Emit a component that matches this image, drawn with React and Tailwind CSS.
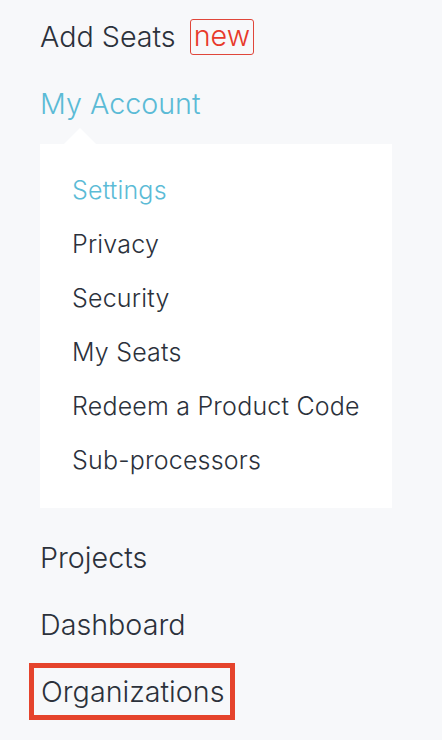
import React from 'react';

const subItems = ['Settings', 'Privacy', 'Security', 'My Seats', 'Redeem a Product Code', 'Sub-processors'];

export default function App() {
    return (
        <div
            className="min-h-screen w-full bg-[#f7f8fa] text-[#2b313b] font-light pl-[40px] pt-[3px]"
            style={{ fontFamily: 'Inter, "Noto Sans", sans-serif' }}
        >
            <div className="h-[67px] flex items-center text-[28.7px]">
                <span>Add Seats</span>
                <span className="ml-[14px] h-[36px] px-[3px] flex items-center border border-[#e0463a] rounded-[3px] text-[#e8392a] leading-none">
                    new
                </span>
            </div>
            <div className="h-[67px] flex items-center text-[28.7px] text-[#5bbbd6]">My Account</div>

            <div className="relative mt-[7px] w-[352px] bg-white pt-[20px] pb-[20px] pl-[32px]">
                <div className="absolute -top-[16px] left-[24px] w-0 h-0 border-l-[16px] border-r-[16px] border-b-[16px] border-l-transparent border-r-transparent border-b-white" />
                {subItems.map((item, i) => (
                    <div
                        key={item}
                        className={
                            'h-[54px] flex items-center text-[25px] tracking-[0.2px] ' +
                            (i === 0 ? 'text-[#5bbbd6]' : 'text-[#2b313b]')
                        }
                    >
                        {item}
                    </div>
                ))}
            </div>

            <div className="mt-[16px] h-[67px] flex items-center text-[28.7px]">Projects</div>
            <div className="h-[67px] flex items-center text-[28.7px]">Dashboard</div>
            <div className="h-[67px] flex items-center">
                <div className="-ml-[11px] h-[57px] flex items-center border-[5px] border-[#e5432c] pl-[7px] pr-[5px] text-[28.7px]">
                    Organizations
                </div>
            </div>
        </div>
    );
}
